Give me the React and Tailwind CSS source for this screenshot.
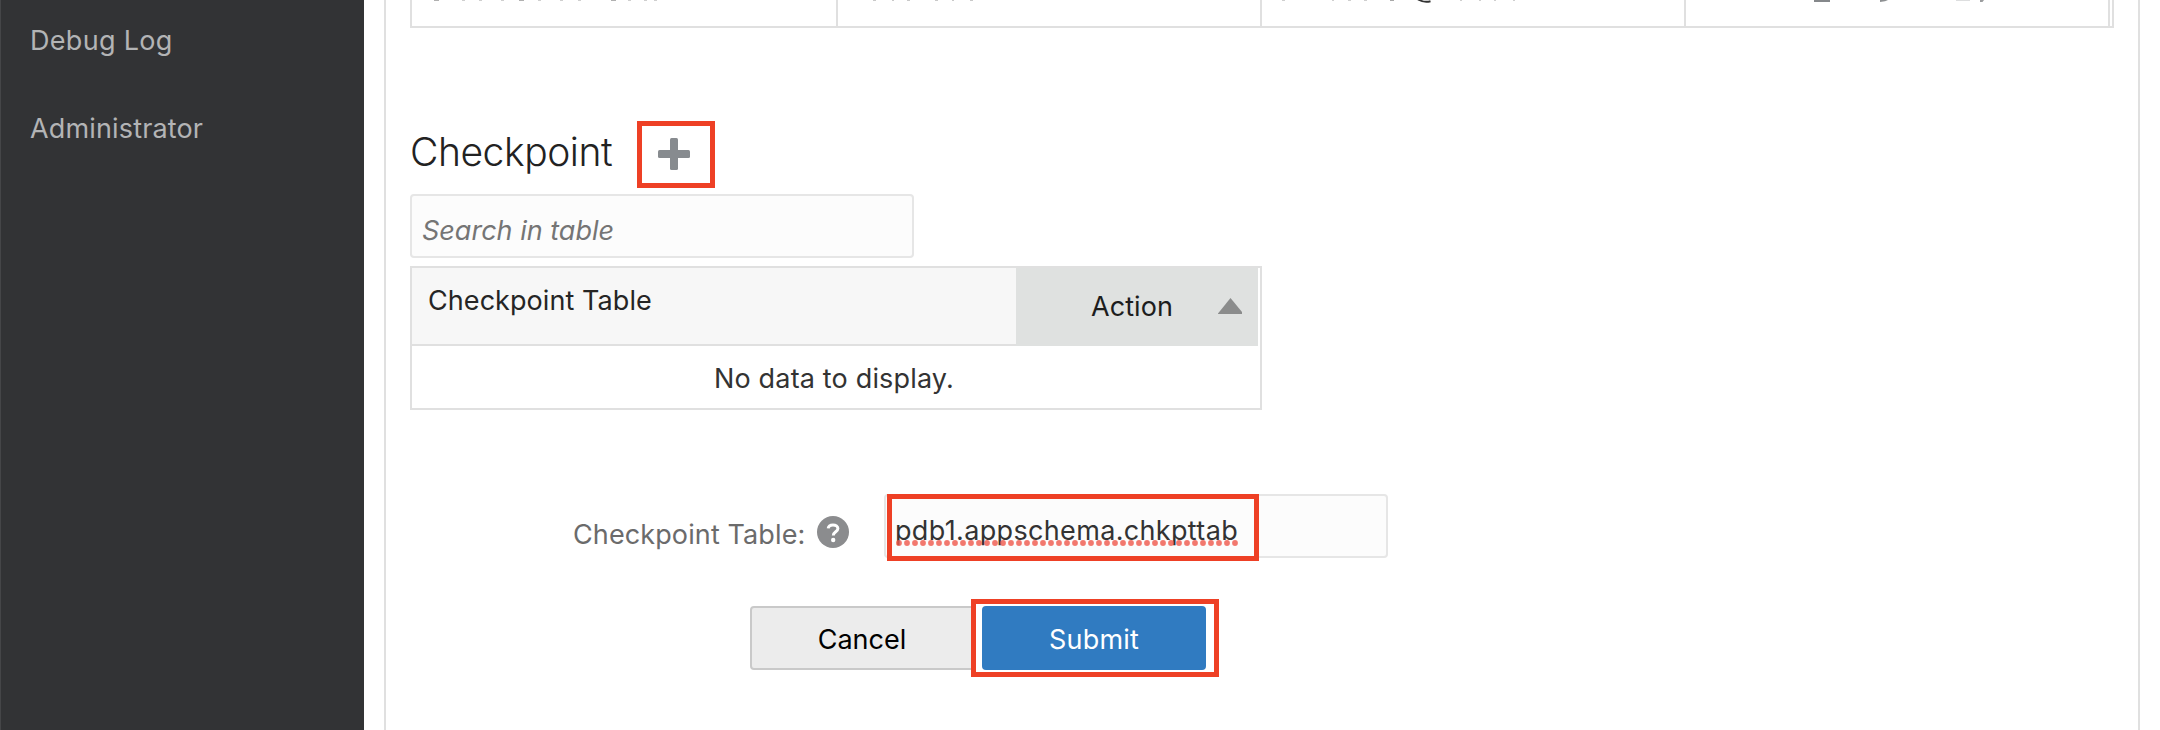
const NAV_ITEMS = [
  { label: "Debug Log", tracking: "tracking-[0.296px]" },
  { label: "Administrator", tracking: "tracking-[0.15px]" },
];

function Sidebar() {
  return (
    <nav className="flex h-full w-[364px] shrink-0 flex-col gap-[47px] border-l border-[#454648] bg-[#323335] pt-5 pl-7">
      {NAV_ITEMS.map((item) => (
        <a key={item.label} className={`block pl-px leading-[41px] text-[#b3b4b5] ${item.tracking}`}>
          {item.label}
        </a>
      ))}
    </nav>
  );
}

function CredentialsRow() {
  return (
    <div className="flex h-7 w-[1704px] border-x-2 border-b-2 border-[#e0e0e0]">
      <div className="h-[26px] w-[426px] border-r-2 border-[#e0e0e0] pl-[13px]">
        <svg className="block" width="240" height="1" viewBox="0 0 240 1">
          <path d="M9 0h5v1h-5zM94 0h5v1h-5zM186 0h5v1h-5z" fill="#b0b0b0" />
          <path
            d="M37 0h3v1h-3zM54 0h3v1h-3zM76 0h3v1h-3zM113 0h3v1h-3zM135 0h3v1h-3zM153 0h3v1h-3zM203 0h3v1h-3zM219 0h3v1h-3zM229 0h3v1h-3z"
            fill="#cfcfcf"
          />
        </svg>
      </div>
      <div className="h-[26px] w-[424px] border-r-2 border-[#e0e0e0] pl-3">
        <svg className="block" width="140" height="1" viewBox="0 0 140 1" fill="#c9c9c9">
          <path d="M23 0h3v1h-3zM42 0h2v1h-2zM57 0h3v1h-3zM85 0h3v1h-3zM102 0h2v1h-2zM120 0h3v1h-3z" />
        </svg>
      </div>
      <div className="h-[26px] w-[424px] border-r-2 border-[#e0e0e0] pl-[14px]">
        <svg className="block" width="250" height="4" viewBox="0 0 250 4">
          <path
            d="M6 0h3v1h-3zM56 0h2v1h-2zM72 0h3v1h-3zM88 0h3v1h-3zM184 0h2v1h-2zM203 0h2v1h-2zM218 0h2v1h-2zM237 0h2v1h-2z"
            fill="#cfcfcf"
          />
          <path d="M114 0h4v1h-4z" fill="#a8a8a8" />
          <path d="M142 -0.500Q148 3 154.500 1.300" fill="none" stroke="#333" strokeWidth="2" />
        </svg>
      </div>
      <div className="h-[26px] w-[424px] border-r-2 border-[#e0e0e0] pl-32">
        <svg className="block" width="172" height="2" viewBox="0 0 172 2">
          <rect x="0" y="0" width="16" height="2" fill="#85888b" />
          <path d="M66 0h8l-3 1.2l-5 .8z" fill="#8d9092" />
          <rect x="142" y="0" width="14" height="1" fill="#dddedf" />
          <path d="M166 0h4l-1.5 2h-2.5z" fill="#9b9d9f" />
        </svg>
      </div>
    </div>
  );
}

function CheckpointTable() {
  return (
    <div className="mt-2 h-[144px] w-[852px] border-2 border-[#e0e0e0] bg-white">
      <div className="flex h-[78px] w-[846px]">
        <div className="h-[78px] w-[604px] border-b-2 border-[#e0e0e0] bg-[#f7f7f7] pt-3 pl-4 leading-[41px] tracking-[0.067px] text-[#252525]">
          Checkpoint Table
        </div>
        <div className="flex h-[78px] w-[242px] items-start bg-[#dfe1e0] pt-[18px] pl-[75px] leading-[41px] tracking-[0.077px] text-[#1d1d1d]">
          <span className="w-[127px]">Action</span>
          <svg className="mt-3 block" width="24" height="16" viewBox="0 0 24 16">
            <path d="M12.500 0L24 14v2H0v-.5z" fill="#8b8c8c" />
          </svg>
        </div>
      </div>
      <div className="h-[62px] w-[848px] pt-3 pl-[302px] leading-[41px] tracking-[0.165px] text-[#333]">
        No data to display.
      </div>
    </div>
  );
}

function CheckpointForm() {
  return (
    <form className="flex flex-col">
      <div className="mt-[84px] flex h-16 pl-[163px]">
        <label className="mt-5 w-[244px] leading-[41px] tracking-[0.11px] text-[#6b6b6b]">Checkpoint Table:</label>
        <svg className="mt-[22px] block" width="32" height="32" viewBox="0 0 32 32">
          <circle cx="16" cy="16" r="16" fill="#8b8c8e" />
          <path
            d="M11.200 12.400c.3-2.300 2.200-3.500 4.800-3.500 2.800 0 4.900 1.400 4.900 3.700 0 3.200-4.600 3.200-4.600 6.900"
            fill="none"
            stroke="#fff"
            strokeWidth="3"
          />
          <circle cx="16.200" cy="24" r="2.200" fill="#fff" />
        </svg>
        <div className="relative ml-[35px] h-16 w-[504px] rounded border-2 border-[#e6e6e6] bg-[#fcfcfc]">
          <div className="mt-[14px] ml-[9px] leading-[41px] tracking-[0.34px] whitespace-nowrap text-[#333]">
            pdb1.appschema.chkpttab
          </div>
          <svg className="absolute top-[44px] left-[10px]" width="342" height="6" viewBox="0 0 342 6">
            <defs>
              <pattern id="spelling-dots" width="8" height="6" patternUnits="userSpaceOnUse">
                <circle cx="3" cy="3" r="2.900" fill="#f0574b" fillOpacity="0.8" />
              </pattern>
            </defs>
            <rect width="342" height="6" fill="url(#spelling-dots)" />
          </svg>
          <div className="absolute -top-0.5 left-[1px] h-[67px] w-[372px] border-[5px] border-[#ee4025]" />
        </div>
      </div>
      <div className="mt-12 flex h-16 pl-[340px]">
        <button
          type="button"
          className="h-16 w-[226px] rounded border-2 border-[#c9c9c9] bg-[#ececec] pt-0.5 pr-0.5 leading-[41px] text-black"
        >
          Cancel
        </button>
        <div className="relative ml-1.5 h-16 w-56">
          <div className="absolute -top-[7px] -left-[11px] h-[78px] w-[248px] border-[5px] border-[#ee4025] bg-white" />
          <button
            type="button"
            className="relative block h-16 w-56 rounded bg-[#307bc1] pt-0.5 tracking-[0.198px] leading-[41px] text-white"
          >
            Submit
          </button>
        </div>
      </div>
    </form>
  );
}

export default function App() {
  return (
    <div className="flex h-[730px] w-[2160px] overflow-hidden bg-white font-['Inter',sans-serif] text-[27px] font-normal">
      <Sidebar />
      <main className="ml-5 h-full w-[1756px] border-x-2 border-[#e0e0e0] pl-6">
        <CredentialsRow />
        <div className="mt-[93px] flex h-[67px]">
          <h2 className="mt-[3px] w-[227px] text-[39px] leading-[55px] font-light tracking-[-0.447px] text-[#222]">
            Checkpoint
          </h2>
          <button
            type="button"
            className="flex h-[67px] w-[78px] items-center justify-center border-[5px] border-[#ee4025] pr-[4px] pb-px"
          >
            <svg className="block" width="32" height="32" viewBox="0 0 32 32" fill="#878b8f">
              <rect x="12" y="0" width="8" height="32" rx="1.500" />
              <rect x="0" y="12" width="32" height="8" rx="1.500" />
            </svg>
          </button>
        </div>
        <div className="mt-1.5 h-16 w-[504px] rounded border-2 border-[#e6e6e6] bg-[#fcfcfc] pt-[14px] pl-2.5 leading-[41px] text-[#757575] italic">
          Search in table
        </div>
        <CheckpointTable />
        <CheckpointForm />
      </main>
    </div>
  );
}
